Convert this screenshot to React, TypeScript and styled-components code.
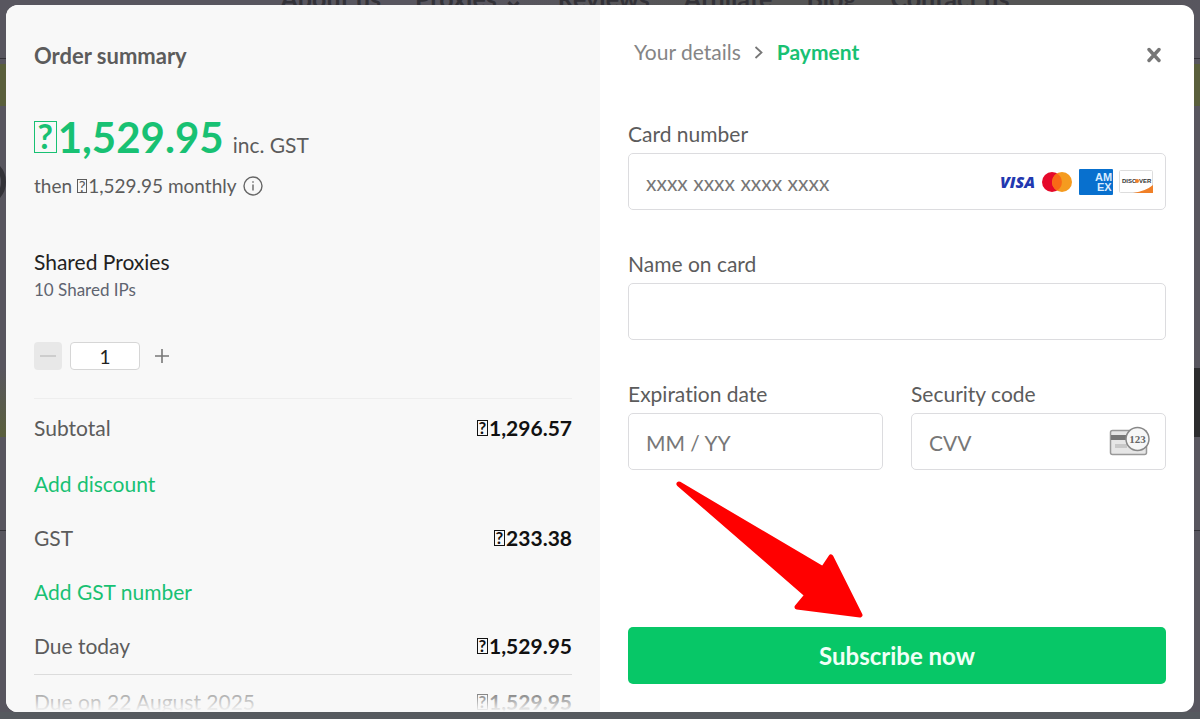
import React, { useState } from "react";
import styled, { createGlobalStyle } from "styled-components";

const GlobalStyle = createGlobalStyle`
  * { box-sizing: border-box; }
  body { margin: 0; background: #59585d; font-family: Lato, "Liberation Sans", sans-serif; font-variant-ligatures: none; }
  button, input { font-family: inherit; }
  p, h2, h3 { margin: 0; font-weight: 400; }
`;

const GREEN = "#07c767";

const Page = styled.div`
  position: relative;
  height: 100vh;
  min-height: 600px;
  padding: 5px 6px 7px;
  overflow: hidden;
  background: linear-gradient(90deg, #58565f 0, #58565f 40%, #555 60%, #555 90%, #58565f 100%);
`;

const Backdrop = styled.div`
  position: absolute;
  inset: 0;
  display: flex;
  flex-direction: column;
  border-bottom: 7px solid #565a5f;
`;

const SiteNav = styled.nav`
  display: flex;
  justify-content: center;
  gap: 34px;
  height: 73px;
  margin-top: -14px;
  padding-left: 90px;
  font-size: 25px;
  line-height: 24px;
  font-weight: 700;
  color: #333238;
  border-bottom: 1px solid #333238;
`;

const Hero = styled.div`
  height: 42px;
  margin-top: 5px;
  background: #5a5f3c;
`;

const Ring = styled.div`
  width: 48px;
  height: 48px;
  margin: 52px 0 0 -42px;
  border: 5px solid #333238;
  border-radius: 50%;
`;

const Band = styled.div`
  display: flex;
  justify-content: space-between;
  height: 69px;
  margin-top: 162px;
`;

const Tint = styled.div`
  width: 20px;
  background: linear-gradient(#58565f, #5a5f3c);
`;

const SideTab = styled.div`
  width: 20px;
  background: #2c2c2e;
`;

const Divider = styled.div`
  height: 1px;
  margin-top: 93px;
  background: #333238;
`;

const Dialog = styled.section`
  position: relative;
  display: grid;
  grid-template-columns: repeat(2, minmax(0, 1fr));
  height: 100%;
  border-radius: 12px;
  overflow: hidden;
  background: #fff;
`;

const Summary = styled.div`
  position: relative;
  overflow: hidden;
  padding: 37px 28px 0;
  background: #f8f8f8;
  color: #5c5c5c;
  font-size: 21px;
  line-height: 28px;
`;

const Title = styled.h2`
  font-size: 22px;
  line-height: 28px;
  font-weight: 700;
  color: #5c5c5c;
`;

const Total = styled.p`
  display: flex;
  align-items: baseline;
  gap: 9px;
  height: 48px;
  margin-top: 43px;
  line-height: 48px;
`;

const TotalAmount = styled.strong`
  font-size: 42px;
  font-weight: 700;
  color: #18c173;
`;

const Renewal = styled.p`
  display: flex;
  align-items: center;
  gap: 6px;
  margin-top: 11px;
  font-size: 19px;
`;

const Symbol = styled.span`
  display: inline-block;
  width: 0.54em;
  height: 0.76em;
  margin-right: 1px;
  border: 1px solid currentColor;
  text-align: center;
  overflow: hidden;
`;

const SymbolMark = styled.span`
  display: block;
  font-size: 0.8em;
  line-height: 0.86;
`;

const Product = styled.h3`
  margin-top: 48px;
  font-size: 21px;
  line-height: 28px;
  color: #222;
`;

const Plan = styled.p`
  margin-top: 2px;
  font-size: 17px;
  line-height: 24px;
  color: #5f6470;
`;

const Stepper = styled.div`
  display: flex;
  gap: 8px;
  height: 28px;
  margin: 40px 0 28px;
`;

const StepButton = styled.button`
  display: grid;
  place-items: center;
  width: 28px;
  padding: 0;
  border: 0;
  border-radius: 4px;
  background: transparent;
  color: #777;
  &:disabled { background: #e8e8e8; color: #c4c4c4; }
`;

const Quantity = styled.input`
  width: 70px;
  border: 1px solid #d6d6d6;
  border-radius: 4px;
  background: #fff;
  text-align: center;
  font-size: 19px;
  color: #222;
`;

const Rule = styled.hr<{ $strong?: boolean }>`
  height: 1px;
  margin: 0 0 ${(p) => (p.$strong ? 13 : 15)}px;
  border: 0;
  background: ${(p) => (p.$strong ? "#dcdcdc" : "#eee")};
`;

const Line = styled.div<{ $space: number }>`
  display: flex;
  justify-content: space-between;
  height: 28px;
  margin-bottom: ${(p) => p.$space}px;
`;

const Amount = styled.span`
  font-weight: 700;
  color: #111;
`;

const TextLink = styled.a`
  display: block;
  width: max-content;
  margin-bottom: 26px;
  color: #18c173;
  text-decoration: none;
`;

const Fade = styled.div`
  position: absolute;
  inset: auto 0 0;
  height: 36px;
  background: linear-gradient(rgba(248, 248, 248, 0), #f8f8f8);
`;

const Checkout = styled.form`
  display: flex;
  flex-direction: column;
  padding: 33px 28px 28px;
  color: #5c5c5c;
  font-size: 21px;
  line-height: 28px;
`;

const Top = styled.div`
  display: flex;
  align-items: center;
  justify-content: space-between;
  padding-left: 6px;
  margin-bottom: 54px;
`;

const Steps = styled.nav`
  display: flex;
  align-items: center;
  gap: 13px;
  color: #858585;
`;

const CurrentStep = styled.span`
  font-weight: 700;
  color: #18c173;
`;

const Close = styled.button`
  display: grid;
  place-items: center;
  width: 24px;
  height: 28px;
  padding: 6px 0 0;
  border: 0;
  background: none;
  color: #777;
`;

const Fields = styled.div`
  display: grid;
  grid-template-columns: repeat(2, minmax(0, 1fr));
  gap: 40px 28px;
`;

const Field = styled.div<{ $wide?: boolean }>`
  display: flex;
  flex-direction: column;
  gap: 5px;
  grid-column: ${(p) => (p.$wide ? "1 / -1" : "auto")};
`;

const Box = styled.div`
  display: flex;
  align-items: center;
  height: 57px;
  padding: 0 12px 0 17px;
  border: 1px solid #dcdcdf;
  border-radius: 5px;
`;

const TextInput = styled.input`
  flex: 1;
  min-width: 0;
  height: 100%;
  padding: 1px 0 0;
  border: 0;
  outline: 0;
  background: none;
  font-size: 21px;
  color: #333;
  &::placeholder { color: #777; opacity: 1; }
`;

const Cards = styled.div`
  display: flex;
  align-items: center;
  gap: 6px;
`;

const Visa = styled.span`
  font: italic 800 16px/26px "Open Sans", sans-serif;
  color: #2238b0;
`;

const Footer = styled.div`
  position: relative;
  margin-top: auto;
`;

const Pointer = styled.svg`
  position: absolute;
  left: 46px;
  bottom: calc(100% + 8px);
  pointer-events: none;
`;

const Subscribe = styled.button`
  display: block;
  width: 100%;
  height: 57px;
  border: 0;
  border-radius: 5px;
  background: ${GREEN};
  color: #f1fff7;
  font-size: 24px;
  font-weight: 700;
`;

const MasterCard = () => (
  <svg width="32" height="22" viewBox="0 0 32 22" role="img" aria-label="Mastercard">
    <circle cx="11" cy="11" r="10" fill="#e5092a" />
    <circle cx="21" cy="11" r="10" fill="#f59b1f" />
    <path d="M16 2.4a10 10 0 0 1 0 17.2a10 10 0 0 1 0-17.2" fill="#f96a16" />
  </svg>
);

const Amex = () => (
  <svg width="34" height="26" viewBox="0 0 34 26" role="img" aria-label="American Express">
    <rect width="34" height="26" rx="1" fill="#0870ce" />
    <g fill="#d8ecff" fontFamily="Liberation Sans" fontWeight="700" fontSize="11">
      <text x="16" y="12">AM</text>
      <text x="18" y="22">EX</text>
    </g>
  </svg>
);

const Discover = () => (
  <svg width="34" height="23" viewBox="0 0 34 23" role="img" aria-label="Discover">
    <rect x=".5" y=".5" width="33" height="22" rx="1" fill="#fff" stroke="#ddd" />
    <path d="M34 15v8H14q13-2 20-8z" fill="#f08028" />
    <g fill="#333" fontFamily="Liberation Sans" fontWeight="700" fontSize="6">
      <text x="3" y="13">DISC</text>
      <text x="20" y="13">VER</text>
    </g>
    <circle cx="18" cy="11" r="2" fill="#f08028" />
  </svg>
);

const CodeCard = () => (
  <svg width="44" height="32" viewBox="0 0 44 32" aria-hidden="true">
    <rect x="1.5" y="4.5" width="36" height="24" rx="2" fill="#e6e6e6" stroke="#999" strokeWidth="1.5" />
    <path d="M2 9h35v5H2z" fill="#777" />
    <path d="M6 19h15M6 21h12" stroke="#aaa" />
    <circle cx="28.5" cy="13" r="11.5" fill="#f7f7f7" stroke="#888" strokeWidth="1.5" />
    <text x="28.5" y="17" textAnchor="middle" fontFamily="Liberation Serif" fontWeight="700" fontSize="11" fill="#666">123</text>
  </svg>
);

function Money({ children }: { children: string }) {
  return (
    <span>
      <Symbol><SymbolMark>?</SymbolMark></Symbol>
      {children}
    </span>
  );
}

export default function App() {
  const [count, setCount] = useState(1);
  return (
    <>
      <GlobalStyle />
      <Page>
        <Backdrop aria-hidden="true">
          <SiteNav>
            <span>About us</span>
            <span>Proxies ⌄</span>
            <span>Reviews</span>
            <span>Affiliate</span>
            <span>Blog</span>
            <span>Contact us</span>
          </SiteNav>
          <Hero />
          <Ring />
          <Band><Tint /><SideTab /></Band>
          <Divider />
        </Backdrop>
        <Dialog role="dialog" aria-label="Checkout">
          <Summary>
            <Title>Order summary</Title>
            <Total>
              <TotalAmount><Money>1,529.95</Money></TotalAmount>
              <span>inc. GST</span>
            </Total>
            <Renewal>
              <span>then <Money>1,529.95</Money> monthly</span>
              <svg width="20" height="20" viewBox="0 0 20 20" fill="none" stroke="#666" strokeWidth="1.4" aria-hidden="true">
                <circle cx="10" cy="10" r="9" />
                <path d="M10 8.5v6M10 5.2v1.6" />
              </svg>
            </Renewal>
            <Product>Shared Proxies</Product>
            <Plan>10 Shared IPs</Plan>
            <Stepper>
              <StepButton type="button" aria-label="Decrease quantity" disabled={count < 2} onClick={() => setCount(count - 1)}>
                <svg width="16" height="16" stroke="currentColor" strokeWidth="1.5"><path d="M0 8h16" /></svg>
              </StepButton>
              <Quantity aria-label="Quantity" value={count} onChange={(e) => setCount(Number(e.target.value) || 1)} />
              <StepButton type="button" aria-label="Increase quantity" onClick={() => setCount(count + 1)}>
                <svg width="14" height="14" stroke="currentColor" strokeWidth="1.6"><path d="M0 7h14M7 0v14" /></svg>
              </StepButton>
            </Stepper>
            <Rule />
            <Line $space={28}><span>Subtotal</span><Amount><Money>1,296.57</Money></Amount></Line>
            <TextLink href="#discount">Add discount</TextLink>
            <Line $space={26}><span>GST</span><Amount><Money>233.38</Money></Amount></Line>
            <TextLink href="#gst">Add GST number</TextLink>
            <Line $space={14}><span>Due today</span><Amount><Money>1,529.95</Money></Amount></Line>
            <Rule $strong />
            <Line $space={14}><span>Due on 22 August 2025</span><Amount><Money>1,529.95</Money></Amount></Line>
            <Fade />
          </Summary>
          <Checkout onSubmit={(e) => e.preventDefault()}>
            <Top>
              <Steps aria-label="Checkout steps">
                <span>Your details</span>
                <svg width="10" height="14" viewBox="0 0 10 14" fill="none" stroke="#777" strokeWidth="1.8" aria-hidden="true"><path d="M1.5 2l6 5.500-6 5.500" /></svg>
                <CurrentStep>Payment</CurrentStep>
              </Steps>
              <Close type="button" aria-label="Close">
                <svg width="14" height="16" viewBox="0 0 14 16" stroke="currentColor" strokeWidth="3.4" strokeLinecap="round"><path d="M2 2.500l10 11M12 2.500l-10 11" /></svg>
              </Close>
            </Top>
            <Fields>
              <Field $wide>
                <label htmlFor="number">Card number</label>
                <Box>
                  <TextInput id="number" placeholder="xxxx xxxx xxxx xxxx" />
                  <Cards><Visa>VISA</Visa><MasterCard /><Amex /><Discover /></Cards>
                </Box>
              </Field>
              <Field $wide>
                <label htmlFor="name">Name on card</label>
                <Box><TextInput id="name" /></Box>
              </Field>
              <Field>
                <label htmlFor="expiry">Expiration date</label>
                <Box><TextInput id="expiry" placeholder="MM / YY" /></Box>
              </Field>
              <Field>
                <label htmlFor="cvv">Security code</label>
                <Box><TextInput id="cvv" placeholder="CVV" /><CodeCard /></Box>
              </Field>
            </Fields>
            <Footer>
              <Pointer width="192" height="140" viewBox="0 0 192 140" aria-hidden="true">
                <path d="M5 5L149 90L157 78L186 136L123 128L133 116Z" fill="#f00" stroke="#f00" strokeWidth="5" strokeLinejoin="round" />
              </Pointer>
              <Subscribe type="submit">Subscribe now</Subscribe>
            </Footer>
          </Checkout>
        </Dialog>
      </Page>
    </>
  );
}
